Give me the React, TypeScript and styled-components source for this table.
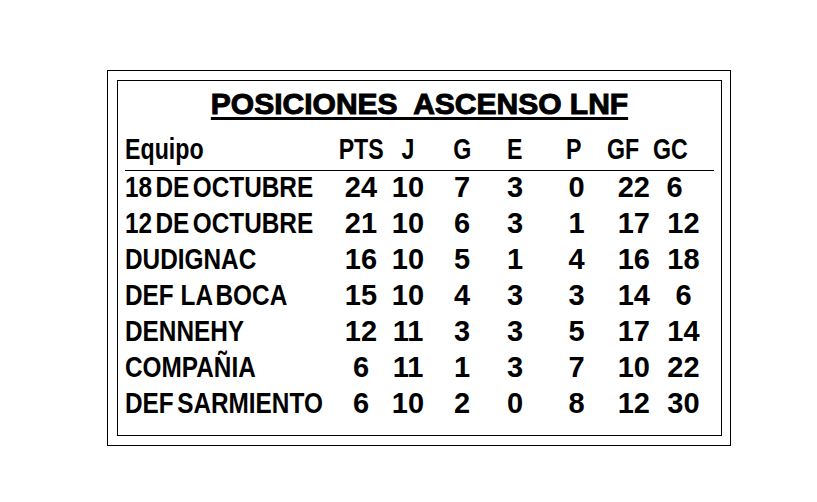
import React from "react";
import styled, { createGlobalStyle } from "styled-components";

const Global = createGlobalStyle`
  html, body { margin: 0; padding: 0; background: #ffffff; }
  body { width: 817px; height: 502px; overflow: hidden; }
`;

const Page = styled.div`
  width: 817px;
  height: 502px;
  box-sizing: border-box;
  padding: 70px 0 0 107px;
  background: #fff;
`;

const OuterFrame = styled.div`
  width: 624px;
  height: 376px;
  box-sizing: border-box;
  border: 1px solid #000;
  padding: 9px 8px 9px 9px;
`;

const InnerFrame = styled.div`
  height: 100%;
  box-sizing: border-box;
  border: 1px solid #000;
  padding: 3px 7px 0 7px;
  display: flex;
  flex-direction: column;
`;

const Title = styled.h1`
  margin: 0 0 12px 0;
  height: 40px;
  line-height: 40px;
  text-align: center;
  font-family: "Liberation Sans", Arial, sans-serif;
  font-weight: 700;
  font-size: 30px;
  color: #000;
  white-space: pre;
  -webkit-text-stroke: 1px #000;
  text-decoration: underline;
  text-decoration-thickness: 3px;
  text-underline-offset: 3px;
`;

const cols = "215px 42px 52px 56px 50px 67px 45px 61px";

const HeaderRow = styled.div`
  display: grid;
  grid-template-columns: ${cols};
  line-height: 26px;
  padding-bottom: 8px;
  border-bottom: 1px solid #000;
  font-family: "Liberation Sans", Arial, sans-serif;
  font-weight: 700;
  font-size: 29px;
  color: #000;
`;

const DataRow = styled.div`
  display: grid;
  grid-template-columns: ${cols};
  height: 36px;
  box-sizing: border-box;
  line-height: 32px;
  padding-bottom: 4px;
  color: #000;
`;

const HeadCell = styled.div<{ $align?: "start" | "center"; $pad?: number }>`
  display: flex;
  justify-content: ${(p) => (p.$align === "start" ? "flex-start" : "center")};
  padding-left: ${(p) => p.$pad ?? 0}px;
  white-space: pre;
`;

const Narrow = styled.span<{ $origin?: "left" | "center"; $sx?: number }>`
  display: inline-block;
  transform: scaleX(${(p) => p.$sx ?? 0.8});
  transform-origin: ${(p) => p.$origin ?? "center"} center;
  white-space: pre;
`;

const TeamCell = styled.div`
  font-family: "Liberation Sans", Arial, sans-serif;
  font-weight: 700;
  font-size: 29px;
  word-spacing: -4px;
  white-space: pre;
`;

const NumCell = styled.div<{ $align?: "center" | "end"; $padL?: number; $padR?: number }>`
  font-family: "Liberation Sans", Arial, sans-serif;
  font-weight: 700;
  font-size: 29px;
  text-align: ${(p) => (p.$align === "end" ? "right" : "center")};
  padding-left: ${(p) => p.$padL ?? 0}px;
  padding-right: ${(p) => p.$padR ?? 0}px;
  white-space: pre;
`;

type Row = {
  team: string;
  pts: number;
  j: number;
  g: number;
  e: number;
  p: number;
  gf: number;
  gc: number;
  gcShift?: number;
};

const rows: Row[] = [
  { team: "18 DE OCTUBRE", pts: 24, j: 10, g: 7, e: 3, p: 0, gf: 22, gc: 6, gcShift: 18 },
  { team: "12 DE OCTUBRE", pts: 21, j: 10, g: 6, e: 3, p: 1, gf: 17, gc: 12 },
  { team: "DUDIGNAC", pts: 16, j: 10, g: 5, e: 1, p: 4, gf: 16, gc: 18 },
  { team: "DEF  LA BOCA", pts: 15, j: 10, g: 4, e: 3, p: 3, gf: 14, gc: 6 },
  { team: "DENNEHY", pts: 12, j: 11, g: 3, e: 3, p: 5, gf: 17, gc: 14 },
  { team: "COMPAÑIA", pts: 6, j: 11, g: 1, e: 3, p: 7, gf: 10, gc: 22 },
  { team: "DEF SARMIENTO", pts: 6, j: 10, g: 2, e: 0, p: 8, gf: 12, gc: 30 },
];

const headers: { label: string; align?: "start" | "center"; pad?: number }[] = [
  { label: "PTS" },
  { label: "J" },
  { label: "G" },
  { label: "E" },
  { label: "P" },
  { label: "GF", align: "start" },
  { label: "GC", align: "start", pad: 1 },
];

export default function App() {
  return (
    <>
      <Global />
      <Page>
        <OuterFrame>
          <InnerFrame>
            <Title>{"POSICIONES  ASCENSO LNF"}</Title>
            <HeaderRow>
              <HeadCell $align="start">
                <Narrow $origin="left">Equipo</Narrow>
              </HeadCell>
              {headers.map((h) => (
                <HeadCell key={h.label} $align={h.align} $pad={h.pad}>
                  <Narrow $origin={h.align === "start" ? "left" : "center"}>{h.label}</Narrow>
                </HeadCell>
              ))}
            </HeaderRow>
            {rows.map((r) => (
              <DataRow key={r.team}>
                <TeamCell>
                  <Narrow $origin="left" $sx={0.84}>{r.team}</Narrow>
                </TeamCell>
                <NumCell>{r.pts}</NumCell>
                <NumCell>{r.j}</NumCell>
                <NumCell>{r.g}</NumCell>
                <NumCell>{r.e}</NumCell>
                <NumCell $padL={6}>{r.p}</NumCell>
                <NumCell $align="end" $padR={2}>{r.gf}</NumCell>
                <NumCell $padL={2} $padR={r.gcShift ?? 0}>{r.gc}</NumCell>
              </DataRow>
            ))}
          </InnerFrame>
        </OuterFrame>
      </Page>
    </>
  );
}
